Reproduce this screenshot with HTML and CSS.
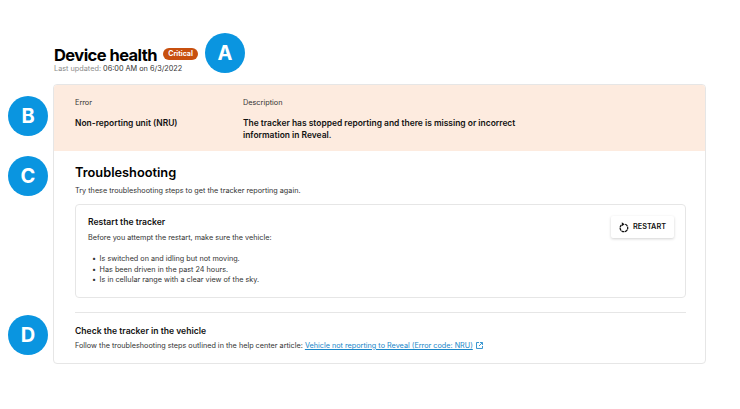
FILE: index.html
```html
<!DOCTYPE html>
<html lang="en">
<head>
<meta charset="utf-8">
<title>Device health</title>
<link rel="stylesheet" href="styles.css">
</head>
<body>
<main class="page">
  <header class="head">
    <div class="title-row">
      <h1 class="title">Device health</h1>
      <span class="pill">Critical</span>
    </div>
    <p class="updated"><span class="muted">Last updated:</span> 06:00 AM on 6/3/2022</p>
  </header>
  <section class="card">
    <div class="error">
      <div class="col-a">
        <div class="label">Error</div>
        <div class="value">Non-reporting unit (NRU)</div>
      </div>
      <div class="col-b">
        <div class="label">Description</div>
        <div class="value">The tracker has stopped reporting and there is missing or incorrect information in Reveal.</div>
      </div>
    </div>
    <div class="body">
      <h2 class="h2">Troubleshooting</h2>
      <p class="text intro">Try these troubleshooting steps to get the tracker reporting again.</p>
      <div class="panel">
        <div class="panel-main">
          <h3 class="h3">Restart the tracker</h3>
          <p class="text">Before you attempt the restart, make sure the vehicle:</p>
          <ul class="list">
            <li>Is switched on and idling but not moving.</li>
            <li>Has been driven in the past 24 hours.</li>
            <li>Is in cellular range with a clear view of the sky.</li>
          </ul>
        </div>
        <button class="btn" type="button">
          <svg class="btn-icon" viewBox="0 0 12 13" width="10" height="11" aria-hidden="true"><path d="M7.4 2.6A4.6 4.6 0 1 1 3 3.4" fill="none" stroke="#111" stroke-width="1.5" stroke-dasharray="3.4 .6"/><path d="M3.4 0.2 6.8 2.6 3.4 5z" fill="#111"/></svg>
          RESTART
        </button>
      </div>
      <div class="check">
        <h3 class="h3">Check the tracker in the vehicle</h3>
        <p class="text">Follow the troubleshooting steps outlined in the help center article: <a class="link" href="#">Vehicle not reporting to Reveal (Error code: NRU)</a>
          <svg class="ext" viewBox="0 0 8 8" width="7" height="7" aria-hidden="true"><path d="M3.5.6H.6v6.8h6.8V4.5M4.6.6h2.8v2.8M7.2.8 3.4 4.6" fill="none" stroke="#1b87c9" stroke-width="1"/></svg>
        </p>
      </div>
    </div>
  </section>
</main>
<span class="mark mark-a">A</span>
<span class="mark mark-b">B</span>
<span class="mark mark-c">C</span>
<span class="mark mark-d">D</span>
</body>
</html>
```
FILE: styles.css
```css
* { box-sizing: border-box; }
html, body { margin: 0; padding: 0; }
body {
  position: relative;
  width: 740px;
  height: 409px;
  overflow: hidden;
  background: #fff;
  color: #111;
  font-family: Inter, "Liberation Sans", sans-serif;
}
.page { padding: 45px 34px 0 53px; }
.head { height: 39px; padding-left: 1px; }
.title-row { display: flex; align-items: center; gap: 6px; height: 20px; }
.title { margin: 0; font-size: 16.5px; line-height: 20px; font-weight: 700; letter-spacing: -0.55px; color: #000; }
.pill {
  background: #c8500f;
  color: #fff;
  font-size: 7px;
  font-weight: 700;
  line-height: 12px;
  height: 12px;
  width: 35px;
  text-align: center;
  border-radius: 6px;
  margin-top: -2px;
}
.updated { margin: -1px 0 0; font-size: 7.3px; line-height: 9px; color: #333; }
.muted { color: #8a8a8a; }
.card {
  height: 280px;
  border: 1px solid #e6e6e6;
  border-radius: 4px;
  overflow: hidden;
}
.error {
  display: flex;
  height: 66px;
  background: #fdebdf;
  padding: 13px 21px 0;
}
.col-a { width: 168px; }
.col-b { width: 290px; }
.label { font-size: 7.3px; line-height: 10px; color: #333; margin-bottom: 9px; }
.value { font-size: 8.45px; line-height: 12px; font-weight: 600; color: #111; }
.body { padding: 13px 19px 0 21px; }
.h2 { margin: 0; font-size: 12.8px; line-height: 17px; font-weight: 600; color: #000; }
.text { margin: 0; font-size: 7.25px; line-height: 10px; color: #333; }
.intro { margin-top: 5px; }
.panel {
  display: flex;
  justify-content: space-between;
  align-items: flex-start;
  height: 94px;
  margin-top: 8px;
  padding: 12px 11px 0 12px;
  border: 1px solid #e6e6e6;
  border-radius: 4px;
}
.h3 { margin: 0 0 5px; font-size: 8.6px; line-height: 11px; font-weight: 600; color: #111; }
.list { margin: 11px 0 0; padding: 0 0 0 4px; list-style: none; font-size: 7.25px; line-height: 10.7px; color: #333; }
.list li { display: flex; gap: 3.5px; }
.list li::before { content: "•"; }
.btn {
  display: flex;
  align-items: center;
  justify-content: center;
  gap: 4px;
  width: 63px;
  height: 22px;
  margin-top: -1px;
  padding: 0;
  border: 0;
  border-radius: 2px;
  background: #fff;
  box-shadow: 0 1px 3px rgba(0, 0, 0, 0.18);
  color: #111;
  font: 600 7.3px/1 Inter, "Liberation Sans", sans-serif;
}
.check { margin-top: 14px; padding-top: 13px; border-top: 1px solid #e6e6e6; }
.check .h3 { margin-bottom: 4px; }
.link { color: #1b87c9; text-decoration: underline; }
.ext { vertical-align: -0.5px; margin-left: 1px; }
.mark {
  position: absolute;
  width: 40px;
  height: 40px;
  border-radius: 50%;
  background: #0a95e0;
  color: #fff;
  font-size: 20px;
  font-weight: 700;
  line-height: 40px;
  text-align: center;
}
.mark-a { left: 205px; top: 33px; }
.mark-b { left: 8px; top: 96px; }
.mark-c { left: 8px; top: 156px; }
.mark-d { left: 8px; top: 315px; }
```
